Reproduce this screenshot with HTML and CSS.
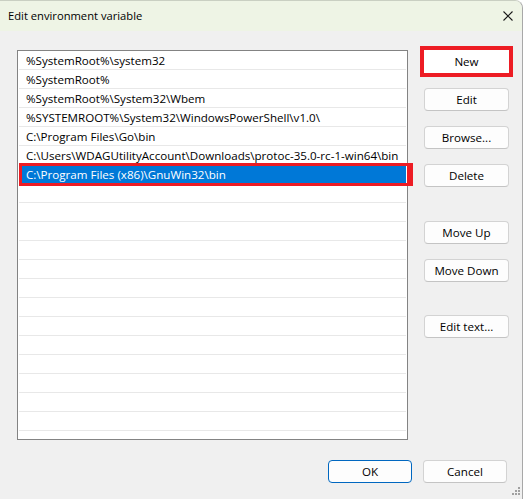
FILE: index.html
```html
<!DOCTYPE html>
<html lang="en">
<head>
<meta charset="utf-8">
<title>Edit environment variable</title>
<link rel="stylesheet" href="styles.css">
</head>
<body>
<div class="window">
  <div class="titlebar">
    <span class="title">Edit environment variable</span>
    <button class="close" aria-label="Close">
      <svg width="10" height="10" viewBox="0 0 10 10"><path d="M0.5 0.5 L9.5 9.5 M9.5 0.5 L0.5 9.5" stroke="#1a1a1a" stroke-width="1.1" fill="none"/></svg>
    </button>
  </div>

  <div class="content">
    <ul class="list">
      <li class="row">%SystemRoot%\system32</li>
      <li class="row">%SystemRoot%</li>
      <li class="row">%SystemRoot%\System32\Wbem</li>
      <li class="row">%SYSTEMROOT%\System32\WindowsPowerShell\v1.0\</li>
      <li class="row">C:\Program Files\Go\bin</li>
      <li class="row">C:\Users\WDAGUtilityAccount\Downloads\protoc-35.0-rc-1-win64\bin</li>
      <li class="row selected marked">C:\Program Files (x86)\GnuWin32\bin</li>
      <li class="row"></li>
      <li class="row"></li>
      <li class="row"></li>
      <li class="row"></li>
      <li class="row"></li>
      <li class="row"></li>
      <li class="row"></li>
      <li class="row"></li>
      <li class="row"></li>
      <li class="row"></li>
      <li class="row"></li>
      <li class="row"></li>
      <li class="row"></li>
    </ul>

    <div class="side">
      <button class="btn marked-btn">New</button>
      <button class="btn">Edit</button>
      <button class="btn">Browse...</button>
      <button class="btn">Delete</button>
      <button class="btn group-start">Move Up</button>
      <button class="btn">Move Down</button>
      <button class="btn group-start-wide">Edit text...</button>
    </div>
  </div>

  <div class="footer">
    <button class="btn default">OK</button>
    <button class="btn">Cancel</button>
  </div>

  <svg class="grip" width="10" height="10" viewBox="0 0 10 10">
    <g fill="#a0a0a0">
      <rect x="8" y="0" width="2" height="2"/>
      <rect x="5" y="3" width="2" height="2"/>
      <rect x="8" y="3" width="2" height="2"/>
      <rect x="2" y="6" width="2" height="2"/>
      <rect x="5" y="6" width="2" height="2"/>
      <rect x="8" y="6" width="2" height="2"/>
    </g>
  </svg>
</div>
</body>
</html>
```
FILE: styles.css
```css
* {
  box-sizing: border-box;
}

html, body {
  margin: 0;
  padding: 0;
  background: #ffffff;
}

body {
  font-family: "Open Sans", "Noto Sans", sans-serif;
  font-size: 11.6px;
  color: #000;
}

.window {
  position: relative;
  width: 523px;
  height: 499px;
  background: #f0f0f0;
  border-top: 1px solid #c9cfc2;
  border-right: 1px solid #a8a8a8;
  border-top-right-radius: 8px;
  display: flex;
  flex-direction: column;
  overflow: hidden;
}

/* caption */
.titlebar {
  height: 30px;
  flex: none;
  background: #eef4e5;
  display: flex;
  align-items: center;
  justify-content: space-between;
  padding: 0 9px 0 8px;
}

.title {
  font-size: 11.2px;
  line-height: 1;
  margin-top: -1px;
}

.close {
  border: 0;
  background: transparent;
  padding: 0;
  width: 10px;
  height: 10px;
  display: block;
  margin-top: -1px;
}

.close svg {
  display: block;
}

/* list + side buttons */
.content {
  display: flex;
  gap: 16px;
  padding: 19px 0 0 17px;
}

.list {
  list-style: none;
  margin: 0;
  padding: 0 1px;
  width: 391px;
  height: 390px;
  background: #fff;
  border: 1px solid #838383;
}

.row {
  position: relative;
  height: 19px;
  line-height: 16px;
  padding: 2px 0 0 7px;
  border-bottom: 1px solid #e8e8e8;
  white-space: nowrap;
}

.row.selected {
  background: #0078d7;
  color: #fff;
}

.row.marked::after {
  content: "";
  position: absolute;
  left: 0;
  right: -7px;
  top: -2px;
  bottom: -3px;
  border: 3px solid #ed1c24;
  border-right-width: 6px;
}

.side {
  width: 85px;
  display: flex;
  flex-direction: column;
  gap: 15px;
}

.btn {
  font: inherit;
  color: #000;
  height: 23px;
  width: 85px;
  padding: 0;
  background: #fdfdfd;
  border: 1px solid #d3d3d3;
  border-bottom-color: #c4c4c4;
  border-radius: 4px;
  line-height: 20px;
}

.side .group-start {
  margin-top: 19px;
}

.side .group-start-wide {
  margin-top: 18px;
}

.marked-btn {
  outline: 4px solid #ed1c24;
  outline-offset: 0;
  border-radius: 0;
  background: #fff;
  border-color: #fff;
}

.footer {
  display: flex;
  justify-content: flex-end;
  gap: 11px;
  padding: 20px 15px 0 0;
}

.footer .btn {
  width: 84px;
}

.btn.default {
  border: 1px solid #0067c0;
}

.grip {
  position: absolute;
  right: 2px;
  bottom: 2px;
}
```
